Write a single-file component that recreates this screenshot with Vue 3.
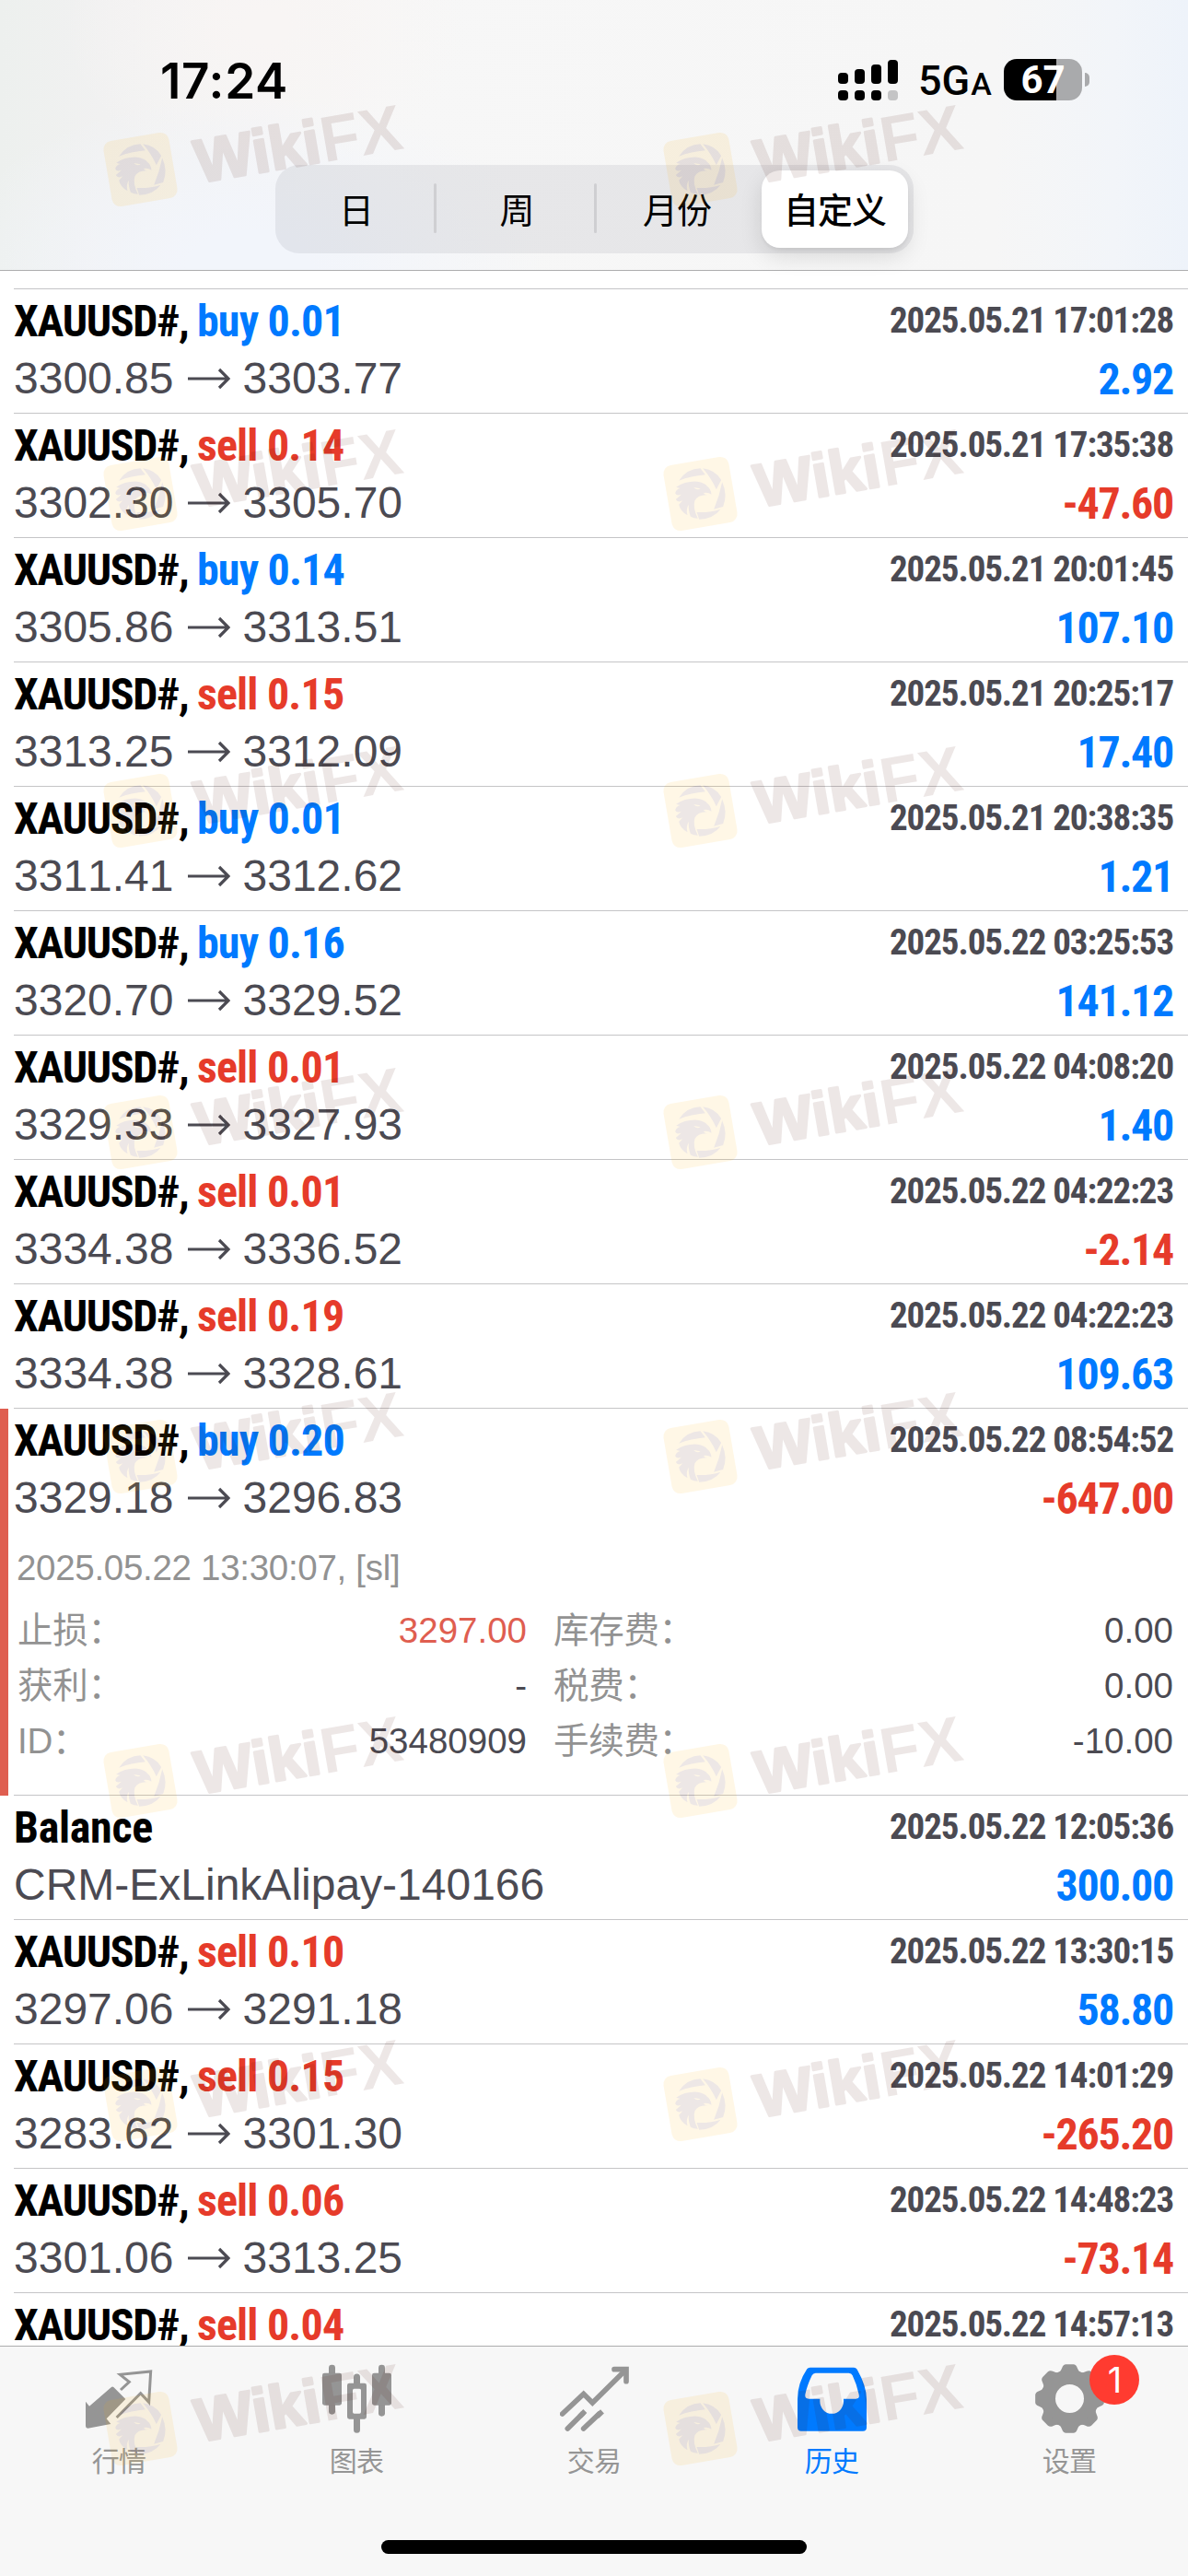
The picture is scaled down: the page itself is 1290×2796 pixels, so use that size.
<template>
	<div class="screen">
		<header class="header">
			<div class="status-bar">
				<span class="clock">17:24</span>
				<div class="status-right">
					<svg class="signal" viewBox="0 0 66 46">
						<rect x="0" y="15" width="11" height="12" rx="4" />
						<rect x="18" y="11" width="11" height="16" rx="4" />
						<rect x="36" y="6" width="11" height="21" rx="4" />
						<rect x="54" y="1" width="11" height="26" rx="4" />
						<rect x="0" y="34" width="11" height="11" rx="4" />
						<rect x="18" y="34" width="11" height="11" rx="4" />
						<rect x="36" y="34" width="11" height="11" rx="4" />
						<rect x="54" y="34" width="11" height="11" rx="4" class="dim" />
					</svg>
					<span class="network">5G<small>A</small></span>
					<div class="battery"><span>67</span></div>
					<i class="battery-cap"></i>
				</div>
			</div>
			<nav class="segments">
				<button v-for="period in periods" :key="period" :class="{ active: period === activePeriod }">{{ period }}</button>
			</nav>
		</header>

		<main class="deals">
			<div v-for="(deal, i) in deals" :key="i" class="deal" :class="{ opened: deal.details }">
				<div class="deal-body">
					<div class="line top">
						<span class="symbol" :class="{ operation: !deal.side }">{{ deal.symbol }}<template v-if="deal.side">, <b :class="deal.side">{{ deal.side }} {{ deal.volume }}</b></template></span>
						<span class="time">{{ deal.time }}</span>
					</div>
					<div v-if="deal.profit" class="line bottom">
						<span v-if="deal.comment" class="price">{{ deal.comment }}</span>
						<span v-else class="price">
							{{ deal.open }}
							<svg class="arrow" viewBox="0 0 46 24"><path d="M0 12H44M34 2L44 12L34 22" /></svg>
							{{ deal.close }}
						</span>
						<span class="profit" :class="{ loss: deal.profit.startsWith('-') }">{{ deal.profit }}</span>
					</div>
					<div v-if="deal.details" class="details">
						<div class="closed">{{ deal.details.closed }}</div>
						<dl>
							<template v-for="item in deal.details.items" :key="item.label">
								<dt>{{ item.label }}</dt>
								<dd :class="{ red: item.red }">{{ item.value }}</dd>
							</template>
						</dl>
					</div>
				</div>
			</div>
		</main>

		<footer class="tabbar">
			<div class="tabs">
				<div class="tab">
					<svg viewBox="33 46 225 225">
						<path d="M36 168L48 183L119 122Q123 118 127 121L166 160L104 224L118 241L43 255Q36 255 36 248Z" fill="currentColor" />
						<path d="M150 130L178 104L148 80L248 70L242 170L215 141L137 220" class="line-8" />
					</svg>
					<span>行情</span>
				</div>
				<div class="tab">
					<svg viewBox="807 46 225 225" fill="currentColor">
						<rect x="828" y="48" width="21" height="162" rx="10" />
						<rect x="807" y="75" width="63" height="105" rx="7" />
						<rect x="990" y="48" width="21" height="168" rx="10" />
						<rect x="969" y="75" width="63" height="105" rx="7" />
						<path d="M909 112V88a10 10 0 0 1 21 0v24zM909 220v40a10 10 0 0 0 21 0v-40z" />
						<path fill-rule="evenodd" d="M895 108h49q7 0 7 7v103q0 7-7 7h-49q-7 0-7-7v-103q0-7 7-7zM911 126q-5 0-5 5v71q0 5 5 5h17q5 0 5-5v-71q0-5-5-5z" />
					</svg>
					<span>图表</span>
				</div>
				<div class="tab">
					<svg viewBox="21 46 225 225" class="line-17">
						<path d="M29 208L98 143L127 172L234 66" />
						<path d="M198 63H237V102" />
						<path d="M46 256L95 207M98 256L150 207" />
						<path d="M86 216L103 199M142 216L159 200" stroke-linecap="butt" />
					</svg>
					<span>交易</span>
				</div>
				<div class="tab current">
					<svg viewBox="795 46 225 225">
						<path
							fill="currentColor"
							fill-rule="evenodd"
							d="M836 57H978Q985 57 989 63Q1020 118 1020 160V252Q1020 264 1008 264H807Q795 264 795 252V160Q795 108 826 62Q829 57 836 57ZM854 75Q846 75 842 83Q826 116 820 145Q818 159 832 159H868V167A38 40 0 0 0 945 167V159H985Q998 159 995 145Q988 112 974 83Q971 75 962 75Z"
						/>
					</svg>
					<span>历史</span>
				</div>
				<div class="tab">
					<svg viewBox="-112.5 -112.5 225 225">
						<circle r="70" fill="none" stroke="currentColor" stroke-width="47" />
						<path v-for="n in 8" :key="n" :transform="`rotate(${n * 45})`" fill="currentColor" d="M-36 -84Q-28 -90 -25 -100Q-21 -112 -12 -112H12Q21 -112 25 -100Q28 -90 36 -84Z" />
					</svg>
					<em class="badge">1</em>
					<span>设置</span>
				</div>
			</div>
			<div class="home-indicator"></div>
		</footer>

		<svg class="watermarks" viewBox="0 0 1290 2796">
			<defs>
				<g id="wiki-mark">
					<g transform="scale(.3333)">
						<rect x="-108" y="-108" width="216" height="216" rx="28" transform="rotate(-9.7)" fill="#ffb000" />
						<path d="M-70 -43Q-44 -82 0 -83L16 -62Q-30 -58 -70 -43Z" />
						<path d="M8 -83Q50 -77 68 -45L52 -14Q36 -50 8 -83Z" />
						<path d="M71 -38Q90 4 74 42L44 50Q62 8 71 -38Z" />
						<path d="M66 50Q42 82 -4 83L-12 60Q30 62 66 50Z" />
						<path d="M-79 -22Q-50 -42 -10 -40Q15 -36 22 -25Q34 -18 36 2Q25 -6 10 -3Q14 4 24 4Q-8 2 -18 22Q-26 46 -8 80Q-22 80 -32 74Q-40 52 -38 35Q-48 50 -42 70Q-66 56 -70 35L-58 22Q-74 30 -80 18L-62 2Q-80 8 -82 -2Q-80 -14 -66 -18Z" />
						<path d="M-22 -21L0 -17Q-10 -10 -22 -21Z" fill="#ffb000" />
					</g>
					<g transform="rotate(-9.7)">
						<text x="60" y="25" textLength="137" lengthAdjust="spacingAndGlyphs" class="round">Wiki</text>
						<text x="198" y="26" textLength="89" lengthAdjust="spacingAndGlyphs">FX</text>
					</g>
				</g>
			</defs>
			<g v-for="y in markRows" :key="y" fill="#4b0f05" opacity=".1">
				<use href="#wiki-mark" x="152.5" :y="y" />
				<use href="#wiki-mark" x="760.5" :y="y" />
			</g>
		</svg>
	</div>
</template>

<script setup>
import { ref } from 'vue'

const periods = ['日', '周', '月份', '自定义']
const activePeriod = ref('自定义')

const trade = (side, volume, open, close, time, profit, details) => ({ symbol: 'XAUUSD#', side, volume, open, close, time, profit, details })

const deals = ref([
	trade('buy', '0.01', '3300.85', '3303.77', '2025.05.21 17:01:28', '2.92'),
	trade('sell', '0.14', '3302.30', '3305.70', '2025.05.21 17:35:38', '-47.60'),
	trade('buy', '0.14', '3305.86', '3313.51', '2025.05.21 20:01:45', '107.10'),
	trade('sell', '0.15', '3313.25', '3312.09', '2025.05.21 20:25:17', '17.40'),
	trade('buy', '0.01', '3311.41', '3312.62', '2025.05.21 20:38:35', '1.21'),
	trade('buy', '0.16', '3320.70', '3329.52', '2025.05.22 03:25:53', '141.12'),
	trade('sell', '0.01', '3329.33', '3327.93', '2025.05.22 04:08:20', '1.40'),
	trade('sell', '0.01', '3334.38', '3336.52', '2025.05.22 04:22:23', '-2.14'),
	trade('sell', '0.19', '3334.38', '3328.61', '2025.05.22 04:22:23', '109.63'),
	trade('buy', '0.20', '3329.18', '3296.83', '2025.05.22 08:54:52', '-647.00', {
		closed: '2025.05.22 13:30:07, [sl]',
		items: [
			{ label: '止损：', value: '3297.00', red: true },
			{ label: '库存费：', value: '0.00' },
			{ label: '获利：', value: '-' },
			{ label: '税费：', value: '0.00' },
			{ label: 'ID：', value: '53480909' },
			{ label: '手续费：', value: '-10.00' },
		],
	}),
	{ symbol: 'Balance', comment: 'CRM-ExLinkAlipay-140166', time: '2025.05.22 12:05:36', profit: '300.00' },
	trade('sell', '0.10', '3297.06', '3291.18', '2025.05.22 13:30:15', '58.80'),
	trade('sell', '0.15', '3283.62', '3301.30', '2025.05.22 14:01:29', '-265.20'),
	trade('sell', '0.06', '3301.06', '3313.25', '2025.05.22 14:48:23', '-73.14'),
	trade('sell', '0.04', '', '', '2025.05.22 14:57:13', ''),
])

const markRows = [184, 536, 880, 1229, 1581, 1933, 2284, 2636]
</script>

<style>
body {
	margin: 0;
	background: #fff;
}
</style>

<style scoped>
.screen {
	position: relative;
	width: 1290px;
	height: 2796px;
	overflow: hidden;
	display: flex;
	flex-direction: column;
	background: #fff;
	font-family: 'Liberation Sans', 'Noto Sans CJK SC', sans-serif;
	font-kerning: none;
}

/* header */
.header {
	flex: none;
	height: 293px;
	border-bottom: 1px solid #adadae;
	background:
		radial-gradient(ellipse 330px 190px at 270px 290px, #f2f5fb 20%, rgba(242, 245, 251, 0) 100%),
		radial-gradient(ellipse 220px 160px at 290px 30px, #f8f5f4 10%, rgba(248, 245, 244, 0) 100%),
		linear-gradient(90deg, #edf0ee 0, #f1f1f1 110px, #f7f7f7 400px, #f6f6f6 1080px, #f2f5f9 1210px, #eef3fa 1290px);
}

.status-bar {
	height: 179px;
	display: flex;
	justify-content: space-between;
	align-items: flex-start;
	padding: 0 107px 0 174px;
	box-sizing: border-box;
}

.clock {
	margin-top: 56px;
	font: 600 53px/64px Inter, sans-serif;
	letter-spacing: 0.7px;
}

.status-right {
	display: flex;
	align-items: center;
	margin-top: 63px;
	height: 47px;
}

.signal {
	flex: none;
	width: 66px;
	height: 46px;
}
.signal .dim {
	fill: #c4c4c5;
}

.network {
	flex: none;
	width: 114px;
	padding: 6px 0 0 21px;
	box-sizing: border-box;
	font: 500 45px/46px Roboto, sans-serif;
	font-stretch: 88%;
	white-space: nowrap;
}
.network small {
	font-size: 34px;
	margin-left: 1px;
}

.battery {
	flex: none;
	width: 85px;
	height: 45px;
	border-radius: 14px;
	background: linear-gradient(90deg, #000 57px, #a9aaac 57px);
	color: #fff;
	text-align: center;
	font: 700 42px/46px Roboto, sans-serif;
	padding-left: 0;
	box-sizing: border-box;
}
.battery-cap {
	flex: none;
	width: 5px;
	height: 15px;
	margin-left: 3px;
	border-radius: 0 5px 5px 0;
	background: #a9aaac;
}

.segments {
	display: flex;
	width: 693px;
	height: 96px;
	margin-left: 299px;
	border-radius: 26px;
	background: rgba(118, 118, 128, 0.12);
}
.segments button {
	flex: none;
	width: 174px;
	display: flex;
	align-items: center;
	justify-content: center;
	padding: 0 0 3px;
	border: 0;
	background: none;
	color: #000;
	font: 400 38px/50px 'Noto Sans CJK SC', sans-serif;
	letter-spacing: -1px;
}
.segments button:first-child {
	width: 175px;
}
.segments button:nth-child(-n + 2)::after {
	content: '';
	width: 3px;
	height: 54px;
	margin-left: auto;
	border-radius: 2px;
	background: #cfcfd2;
}
.segments button:nth-child(-n + 2)::before {
	content: '';
	width: 3px;
	margin-right: auto;
}
.segments .active {
	flex: 1;
	margin: 6px 6px 6px 5px;
	border-radius: 20px;
	background: #fff;
	font-weight: 500;
	box-shadow: 0 9px 24px rgba(0, 0, 0, 0.12), 0 3px 3px rgba(0, 0, 0, 0.04);
}

/* deals */
.deals {
	flex: 1;
	min-height: 0;
	overflow: hidden;
}
.deals::before {
	content: '';
	display: block;
	height: 19px;
	margin-left: 15px;
	border-bottom: 1px solid #c5c5c7;
}

.deal {
	padding-left: 15px;
}
.deal.opened {
	background: linear-gradient(90deg, #df5e50 9px, transparent 9px);
}
.deal-body {
	min-height: 134px;
	border-bottom: 1px solid #c5c5c7;
}
.deal:last-child .deal-body {
	min-height: 0;
	border-bottom: 0;
}

.line {
	display: flex;
	justify-content: space-between;
	padding-right: 16px;
	white-space: nowrap;
}
.top {
	height: 60px;
	padding-top: 5px;
	line-height: 60px;
	font-family: Roboto, sans-serif;
	font-stretch: 75%;
	font-weight: 700;
}
.deal:last-child .top {
	height: 53px;
}
.bottom {
	height: 64px;
	line-height: 66px;
}

.symbol {
	font-size: 48px;
	letter-spacing: -1.4px;
	color: #000;
}
.symbol.operation {
	letter-spacing: -0.3px;
}
.symbol b {
	font-weight: 700;
	letter-spacing: -0.8px;
}
.buy {
	color: #007aff;
}
.sell {
	color: #e63b2a;
}
.time {
	font-size: 39px;
	line-height: 58px;
	letter-spacing: -1.1px;
	color: #4b4a52;
}

.price {
	display: flex;
	align-items: center;
	font-size: 48px;
	color: #4b4a52;
}
.arrow {
	width: 46px;
	height: 24px;
	margin: 0 14px 0 15px;
	fill: none;
	stroke: #4b4a52;
	stroke-width: 3.2;
}

.profit {
	font: 700 48px/66px Roboto, sans-serif;
	font-stretch: 75%;
	letter-spacing: -1.3px;
	color: #007aff;
}
.profit.loss {
	color: #e63b2a;
}

.details {
	padding: 14px 16px 28px 4px;
	color: #929292;
	font-size: 38.5px;
}
.closed {
	height: 68px;
	line-height: 60px;
	letter-spacing: -0.3px;
	text-indent: -1px;
}
.details dl {
	display: grid;
	grid-template-columns: 142px 411px 142px 1fr;
	grid-auto-rows: 60px;
	margin: 0;
	line-height: 60px;
}
.details dt {
	white-space: nowrap;
	letter-spacing: -0.3px;
}
.details dt:nth-of-type(even) {
	padding-left: 29px;
}
.details dd {
	margin: 0;
	text-align: right;
	color: #4b4a52;
}
.details .red {
	color: #df5e50;
}

/* tab bar */
.tabbar {
	flex: none;
	height: 249px;
	border-top: 1px solid #adadae;
	background: #f7f7f7;
	display: flex;
	flex-direction: column;
	align-items: center;
}
.tabs {
	display: flex;
	width: 100%;
	height: 210px;
}
.tab {
	position: relative;
	flex: 1;
	display: flex;
	flex-direction: column;
	align-items: center;
	padding-top: 19px;
	color: #959595;
	font: 400 30px/36px 'Noto Sans CJK SC', sans-serif;
	letter-spacing: -0.8px;
}
.tab svg {
	width: 75px;
	height: 75px;
	margin-bottom: 10px;
}
.tab.current {
	color: #007aff;
}
.line-8 {
	fill: none;
	stroke: currentColor;
	stroke-width: 9;
}
.line-17 {
	fill: none;
	stroke: currentColor;
	stroke-width: 17;
	stroke-linecap: round;
}
.badge {
	position: absolute;
	top: 9px;
	left: 151px;
	width: 54px;
	height: 54px;
	border-radius: 50%;
	background: #ff3b30;
	color: #fff;
	text-align: center;
	font: 400 38px/54px Inter, sans-serif;
}

.home-indicator {
	width: 462px;
	height: 15px;
	border-radius: 8px;
	background: #000;
}

.watermarks {
	position: absolute;
	inset: 0;
	width: 1290px;
	height: 2796px;
	pointer-events: none;
	font: 700 70px 'Liberation Sans', sans-serif;
}
.watermarks .round {
	font-size: 66px;
	stroke: #4b0f05;
	stroke-width: 3;
	stroke-linejoin: round;
}
</style>
